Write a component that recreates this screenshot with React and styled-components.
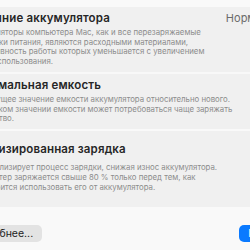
import React from 'react';
import styled, { createGlobalStyle } from 'styled-components';

const Global = createGlobalStyle`
  html, body {
    margin: 0;
    padding: 0;
    background: #f9f9f9;
    overflow: hidden;
  }
  body {
    font-family: Inter, "Noto Sans", "Liberation Sans", sans-serif;
    -webkit-font-smoothing: antialiased;
  }
`;

const Sheet = styled.div`
  width: 350px;
  margin-left: -48px;
  padding-top: 7px;
  display: flex;
  flex-direction: column;
`;

const Group = styled.div`
  background: #f0f0f0;
  border-radius: 6px;
  display: flex;
  flex-direction: column;
  margin-bottom: ${(p) => p.$gap || 0}px;
`;

const Row = styled.div`
  display: flex;
  flex-direction: column;
  gap: ${(p) => p.$gap || 3}px;
  padding: ${(p) => p.$pad || '5px 8px 5px 8px'};
  border-top: ${(p) => (p.$divider ? '2px solid #f8f8f8' : 'none')};
`;

const Head = styled.div`
  display: flex;
  justify-content: space-between;
  align-items: center;
  height: 13px;
`;

const Title = styled.div`
  font-size: 11.5px;
  font-weight: 600;
  letter-spacing: 0.15px;
  color: #262626;
  line-height: 13px;
  white-space: nowrap;
`;

const Desc = styled.div`
  font-size: 7.8px;
  line-height: 9.7px;
  margin-left: 8px;
  color: #8c8c8c;
  white-space: pre;
`;

const Value = styled.div`
  font-size: 11px;
  line-height: 13px;
  color: #6b6b6b;
  white-space: nowrap;
`;

const Toggle = styled.div`
  width: 26px;
  height: 15px;
  border-radius: 8px;
  background: #0a7aff;
  flex-shrink: 0;
`;

const Footer = styled.div`
  display: flex;
  justify-content: space-between;
  align-items: center;
  padding: 0 10px 0 5px;
`;

const Button = styled.div`
  font-size: 10.5px;
  line-height: 17px;
  padding: 0 9px;
  border-radius: 5px;
  background: ${(p) => (p.$primary ? '#0a7aff' : '#e3e3e3')};
  color: ${(p) => (p.$primary ? '#fff' : '#222')};
  white-space: nowrap;
`;

export default function App() {
  return (
    <>
      <Global />
      <Sheet>
        <Group $gap={2}>
          <Row>
            <Head>
              <Title>Состояние аккумулятора</Title>
              <Value>Нормальное</Value>
            </Head>
            <Desc>
              {'Аккумуляторы компьютера Mac, как и все перезаряжаемые\nисточники питания, являются расходными материалами,\nэффективность работы которых уменьшается с увеличением\nсрока использования.'}
            </Desc>
          </Row>
          <Row $divider>
            <Head>
              <Title>Максимальная емкость</Title>
              <Value>100 %</Value>
            </Head>
            <Desc>
              {'Это текущее значение емкости аккумулятора относительно нового.\nПри низком значении емкости может потребоваться чаще заряжать\nустройство.'}
            </Desc>
          </Row>
        </Group>
        <Group $gap={18}>
          <Row $pad="12.5px 8px 14px 8px" $gap={7}>
            <Head>
              <Title>Оптимизированная зарядка</Title>
              <Toggle />
            </Head>
            <Desc>
              {'Mac анализирует процесс зарядки, снижая износ аккумулятора.\nКомпьютер заряжается свыше 80 % только перед тем, как\nпонадобится использовать его от аккумулятора.'}
            </Desc>
          </Row>
        </Group>
        <Footer>
          <Button>Подробнее...</Button>
          <Button $primary>Готово</Button>
        </Footer>
      </Sheet>
    </>
  );
}
